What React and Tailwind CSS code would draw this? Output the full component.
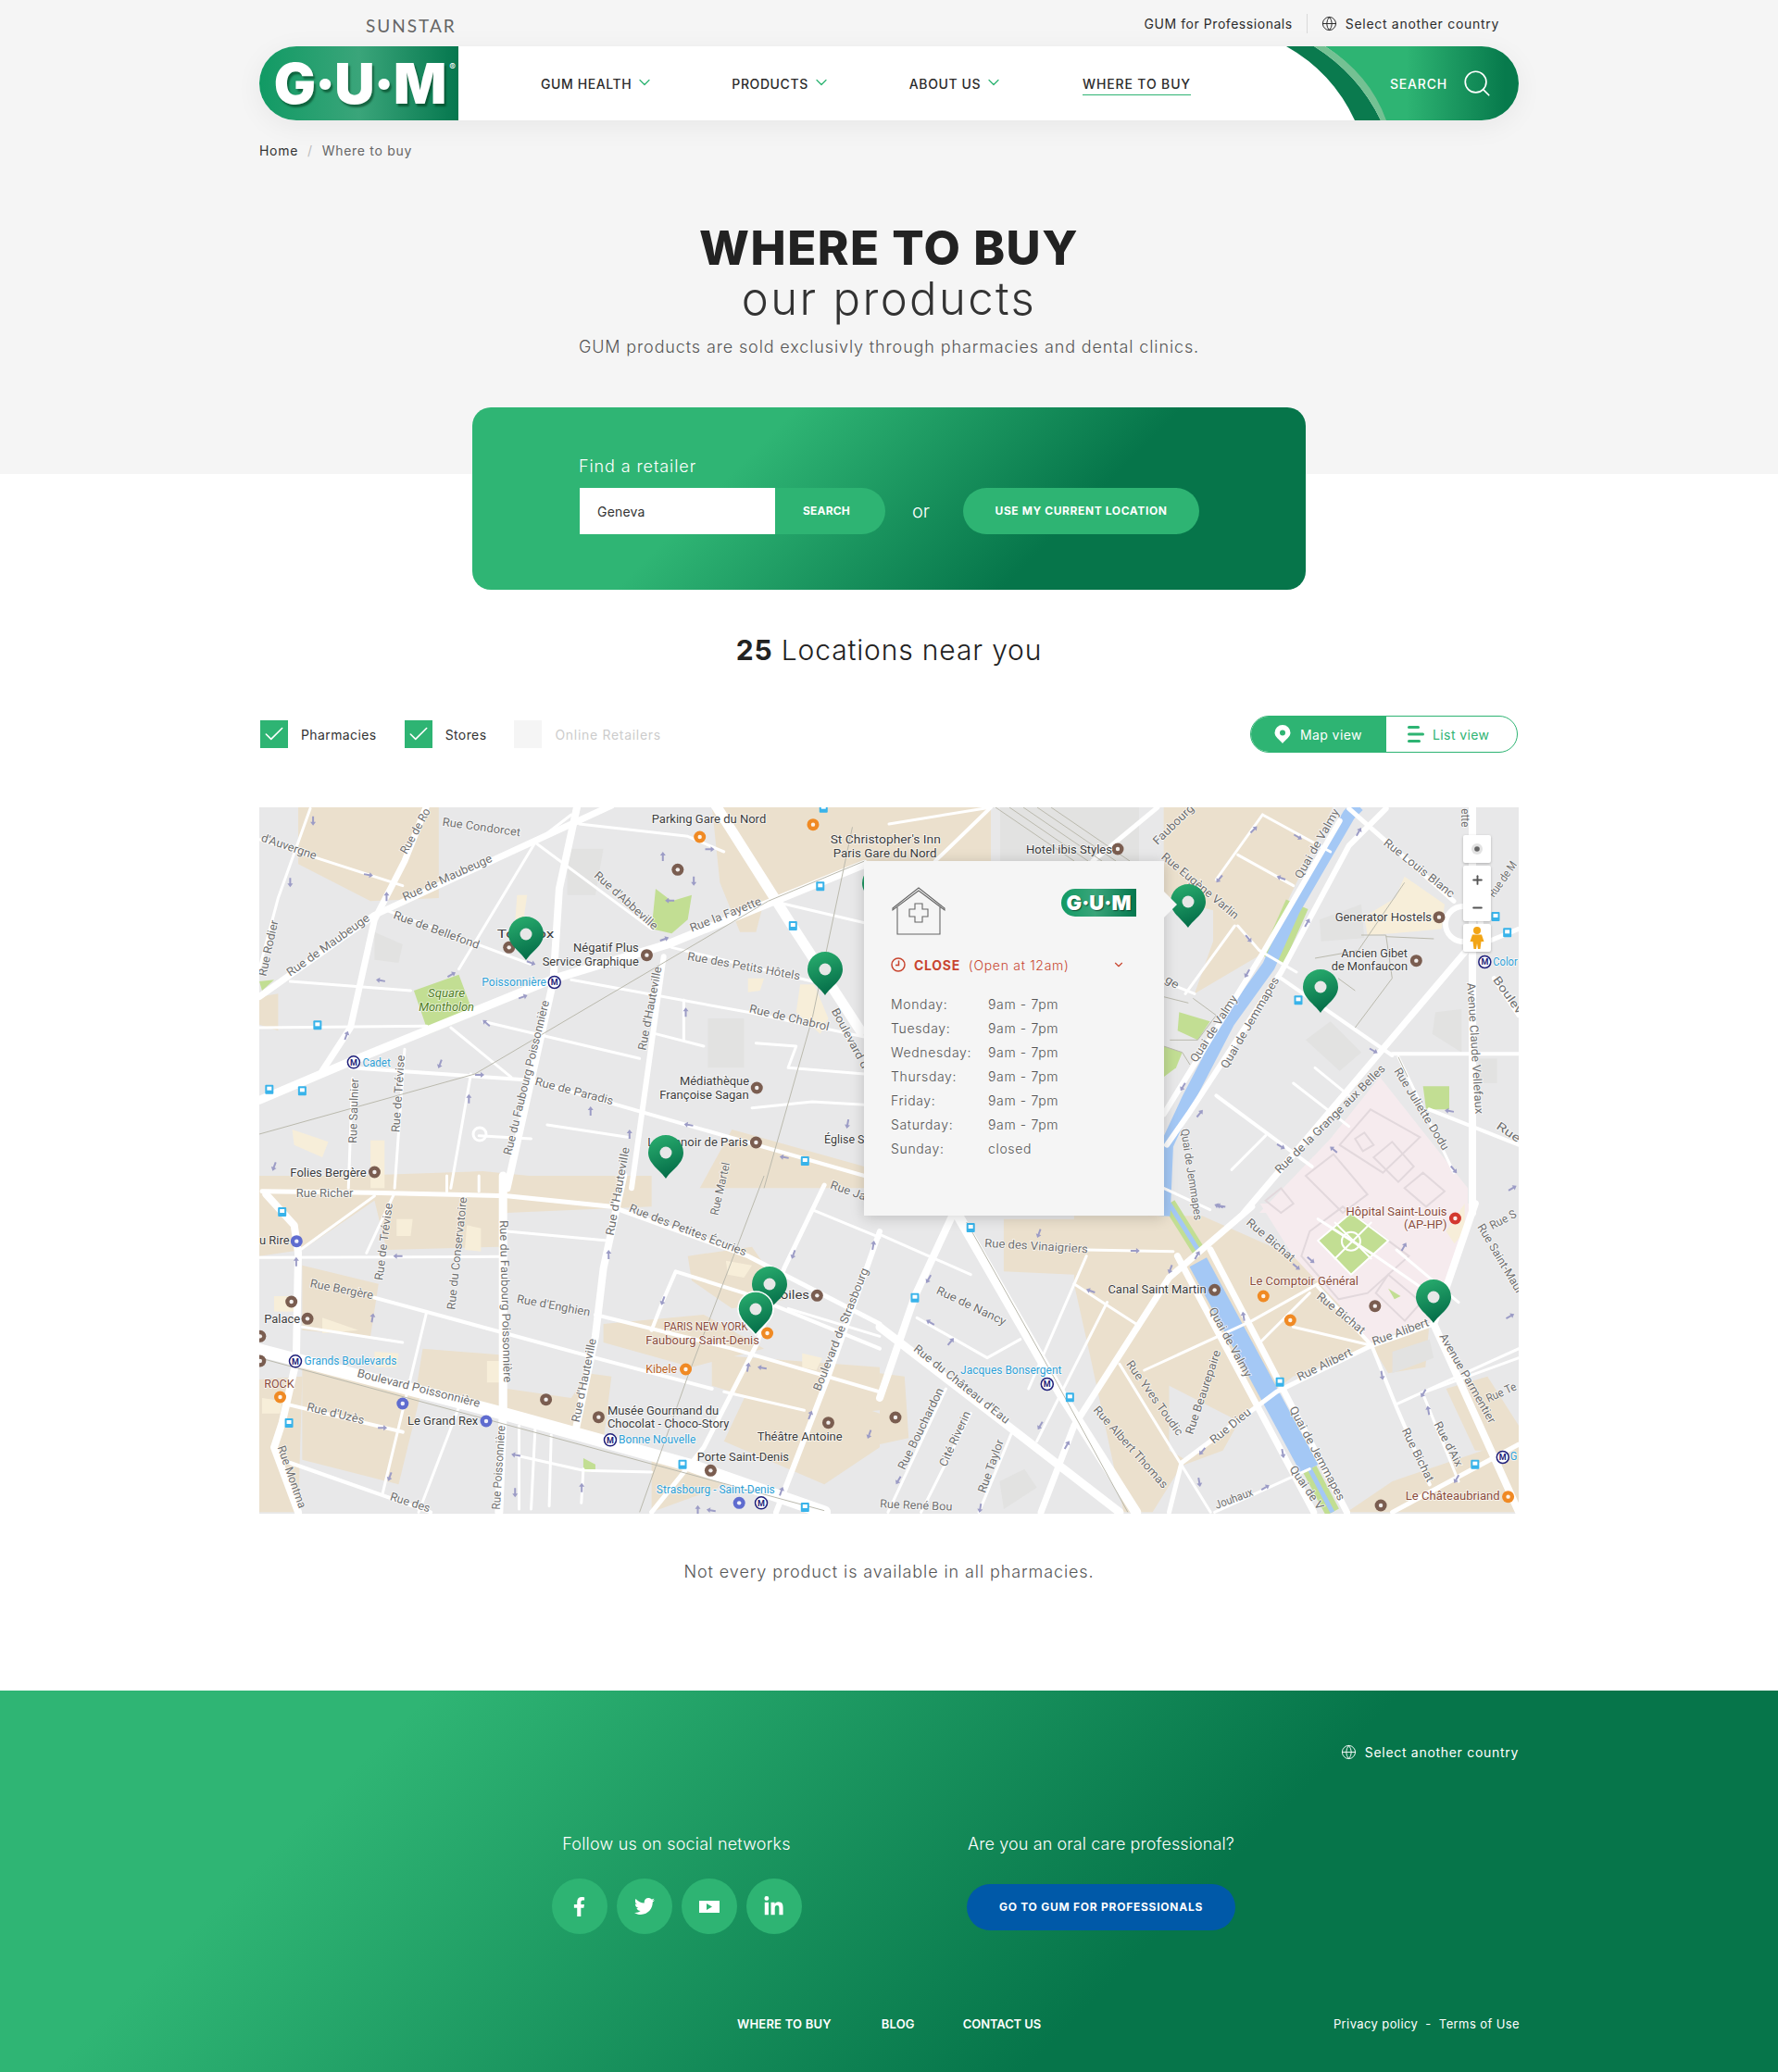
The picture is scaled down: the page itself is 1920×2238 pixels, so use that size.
import React from "react";
import { ChevronDown, Check, Globe, Search, Plus, Minus } from "lucide-react";
import { FaFacebookF, FaTwitter, FaLinkedinIn } from "react-icons/fa";

const R = { A: [270, 860, 2.306, 3], B: [270, 1270, 2.306, 3], C: [1250, 870, 3, 3], D: [950, 1300, 2.24, 3], F: [0, 0, 1, 1] };
const P = (r, x, y) => [R[r][0] + x / R[r][2], R[r][1] + y / R[r][3]];
const pts = (r, a) => { const o = []; for (let i = 0; i < a.length; i += 2) o.push(P(r, a[i], a[i + 1]).join(",")); return o.join(" "); };

const beige = [
  ["A", [120,30,470,30,470,330,300,340,120,220]], ["A", [23,650,70,640,70,760,23,740]],
  ["A", [1150,30,1530,30,1530,210,1280,340,1260,440,1220,440,1170,280]],
  ["A", [1200,1080,1530,1200,1530,1270,1120,1270]], ["A", [23,1240,580,1215,1000,1270,23,1270]],
  ["B", [23,0,1000,0,1000,100,640,120,620,230,340,240,310,80,130,240,23,260]],
  ["B", [130,290,320,350,300,520,130,500]], ["B", [23,660,130,650,120,1090,23,1090]],
  ["B", [130,600,430,680,370,1000,130,920]], ["B", [430,560,620,580,620,760,410,720]],
  ["B", [640,690,800,720,840,640,900,650,880,860,640,780]], ["B", [1090,260,1250,230,1340,400,1200,430,1100,340]],
  ["B", [1150,580,1568,620,1568,760,1400,780,1150,680]], ["B", [880,480,1130,450,1280,560,1100,620,880,540]],
  ["B", [1260,640,1568,770,1568,880,1430,1000,1180,860]], ["B", [1000,900,1150,950,1190,1000,1000,1090]],
  ["C", [20,0,570,0,340,480,120,610,180,440,180,340,20,300]],
  ["D", [470,40,780,40,1000,170,1130,320,1190,460,1000,560,880,680,830,800,730,850,660,1000,590,1000,510,500,470,260]],
  ["D", [300,50,500,50,470,230,300,220]], ["D", [1130,1000,1240,900,1546,760,1546,1000]],
  ["D", [1370,600,1470,560,1546,720,1546,800,1440,800]], ["D", [0,550,60,560,70,760,0,780]], ["D", [1190,460,1330,380,1320,530,1230,550]],
  ["F", [930,872,1070,872,1070,930,930,930]], ["F", [1240,1313,1320,1360,1300,1400,1240,1380]],
];
const cream = [
  ["A", [1370,610,1405,610,1440,720,1420,770,1360,700]], ["A", [1240,590,1280,590,1270,630,1240,635]],
  ["A", [105,1080,195,1120,180,1170,110,1130]], ["A", [300,1115,335,1115,335,1270,300,1270]], ["A", [665,320,690,320,680,410,660,410]],
  ["C", [800,230,930,320,920,400,760,415,680,420,670,360,770,300]],
  ["B", [540,160,575,170,575,245,535,240]], ["B", [365,140,405,140,400,195,365,195]], ["B", [590,600,625,600,625,670,590,670]],
  ["B", [60,390,120,390,120,440,60,440]], ["B", [180,460,270,500,180,510]], ["B", [30,720,80,730,75,770,30,770]], ["B", [310,570,370,575,365,620,310,620]],
  ["B", [1185,275,1250,290,1230,330,1190,320]], ["B", [1375,575,1425,590,1410,630,1375,620]], ["D", [1370,90,1415,0,1415,90,1390,130]],
];
const darker = [
  ["A", [1140,720,1230,720,1230,880,1140,880]], ["A", [790,170,880,170,860,320,790,320]], ["A", [310,440,380,480,370,540,310,530]],
  ["C", [480,760,560,700,660,800,590,860]], ["C", [525,370,660,320,670,430,530,440]], ["C", [1040,820,1100,820,1100,900,1040,900]], ["C", [900,670,985,660,985,800,890,740]],
  ["D", [290,900,350,860,380,920,300,990]], ["D", [1240,480,1330,440,1340,500,1240,550]], ["F", [1080,872,1230,872,1230,930,1080,930]],
];
const wards = [
  ["C", [590,1100,690,985,850,1075,730,1190]], ["C", [760,1090,830,1170,780,1220,700,1140]], ["C", [860,1190,930,1250,870,1300,800,1240]],
  ["C", [480,1200,570,1130,680,1260,600,1320]], ["C", [640,1080,670,1060,700,1100,665,1120]], ["C", [350,1280,400,1240,440,1290,400,1320]],
  ["D", [1040,90,1120,10,1280,170,1180,290,1110,310,1020,170]], ["D", [1230,230,1310,320,1270,380,1200,290]],
];
const parks = [
  ["A", [408,630,520,578,558,710,445,770]], ["A", [1010,300,1050,340,1100,320,1090,400,1050,445,1000,430]], ["A", [23,600,60,595,30,630]],
  ["C", [860,910,945,910,945,985,870,985]], ["C", [70,670,170,700,130,760,65,730]], ["C", [20,780,80,800,60,850,20,880]],
  ["D", [1140,30,1230,120,1140,230,1060,120]], ["B", [830,915,860,935,860,960,830,960]], ["D", [1230,275,1260,300,1245,310]],
];
const roads = [
  ["A",7,[23,650,310,385,900,30]], ["A",9,[23,985,250,860,760,590,1040,480,1530,220]], ["A",7,[180,890,250,750,310,400,385,210,440,30]],
  ["A",11,[1160,30,1350,420,1520,760]], ["A",6,[1030,520,950,1270]], ["A",8,[815,30,770,300,755,600,640,1270]],
  ["A",3,[340,370,700,545]], ["A",4,[250,880,700,920,1100,1070,1530,1230]], ["A",3,[800,595,1240,700,1530,780]],
  ["A",3,[520,560,710,150,800,60]], ["A",3,[820,90,1090,130,1180,180]], ["A",3,[710,150,1000,430]], ["A",3,[23,140,380,290]],
  ["A",3,[580,730,970,850]], ["A",3,[1010,770,1130,810]], ["A",3,[1080,660,1080,790]], ["A",3,[150,40,70,330,23,560]],
  ["A",3,[23,750,440,745]], ["A",3,[255,915,245,1270]], ["A",3,[385,820,360,1270]], ["A",3,[550,900,500,1270]],
  ["A",3,[1050,490,1400,600]], ["A",3,[1300,340,1530,410]], ["A",3,[500,750,650,910]], ["A",3,[400,630,100,600]],
  ["A",3,[740,1065,940,1105]], ["A",3,[570,1100,700,1110]], ["A",3,[1260,800,1360,810,1340,880,1530,900]], ["A",3,[1250,1010,1400,990,1530,1000]],
  ["B",8,[40,60,110,160,120,250,115,600,80,800,60,880,120,1090]], ["B",14,[23,565,630,770,1100,940,1430,1090]],
  ["B",9,[630,0,630,770,620,1090]], ["B",8,[930,0,880,300,860,520,810,830]], ["B",5,[30,50,300,55,640,65,900,100,1240,260,1568,480]],
  ["B",3,[640,180,890,210]], ["B",3,[23,265,620,262]], ["B",4,[310,395,860,590,1150,690]], ["B",4,[860,450,1200,560,1568,700]],
  ["B",4,[1000,500,1030,400,1060,310,1230,380,1568,560]], ["B",5,[1430,30,1330,300,1260,550,1130,880,1000,1090]],
  ["B",6,[1568,180,1440,650,1310,1090]], ["B",3,[1340,430,1568,520]], ["B",4,[90,740,380,830]], ["B",3,[330,1030,440,440]],
  ["B",3,[420,1090,520,750]], ["B",3,[660,905,830,955,1000,960]], ["B",3,[670,810,670,1080]], ["B",3,[710,820,700,1080]], ["B",3,[750,840,745,1070]],
  ["B",3,[830,950,825,1060]], ["B",4,[100,930,340,1040,450,1090]], ["B",3,[360,55,290,250]], ["B",3,[490,0,490,50]], ["B",3,[570,0,570,50]],
  ["B",3,[125,240,310,65]], ["B",3,[130,490,380,540]], ["B",3,[1400,110,1568,200]], ["B",3,[1380,760,1180,700]],
  ["C",5,[620,10,960,310]], ["C",3,[340,30,190,240]], ["C",3,[260,160,440,260]], ["C",3,[260,390,330,470,450,540]], ["C",3,[250,390,90,610]], ["C",3,[20,570,120,610]],
  ["C",6,[590,50,340,480,20,1000]], ["C",6,[740,10,620,130,400,540,100,1000,30,1100]], ["C",7,[1000,470,280,1320]], ["C",4,[400,560,760,810]],
  ["C",4,[760,805,1170,805]], ["C",8,[1020,0,1020,1320]], ["C",5,[1090,560,1170,680]], ["C",4,[190,940,500,1170]], ["C",3,[240,1180,350,1070]],
  ["C",3,[440,900,620,1040]], ["C",3,[510,850,620,940]], ["C",4,[880,985,1170,1100]], ["C",3,[780,815,960,1190]], ["C",3,[340,30,560,150]], ["C",5,[1000,470,1170,400]],
  ["C",3,[20,1240,170,1310]],
  ["D",8,[175,40,85,300,0,630]], ["D",11,[190,40,440,620,620,1000]], ["D",7,[900,10,700,240,470,720,390,1000]], ["D",9,[0,400,310,720,580,1000]],
  ["D",7,[800,150,1130,1000]], ["D",7,[720,170,1050,1000]], ["D",5,[1340,390,1190,460,960,610,730,840,700,1000]], ["D",8,[1440,0,1340,390,1546,1000]],
  ["D",3,[500,150,710,155]], ["D",3,[470,260,620,390]], ["D",3,[640,540,900,380,1060,260]], ["D",4,[1060,270,1190,460,1250,660,1330,910]],
  ["D",3,[1000,400,1190,460]], ["D",3,[1250,650,1546,470]], ["D",3,[1320,610,1546,500]], ["D",5,[1240,1000,1546,780]], ["D",3,[920,450,1040,290]],
  ["D",3,[810,1000,1040,860]], ["D",3,[580,520,800,1000]], ["D",3,[160,600,20,1000]], ["D",3,[220,680,100,1000]], ["D",3,[320,740,240,1000]],
  ["D",3,[550,320,380,770]], ["D",3,[500,170,360,600]], ["D",3,[90,370,260,500,340,440]], ["D",3,[0,100,220,230]],
  ["D",3,[1315,620,1400,900]], ["D",3,[1060,50,1200,170,1340,300]], ["D",3,[1250,150,1400,320]],
  ["F",4,[1070,872,1010,930]], ["F",5,[1250,872,1180,930]], ["F",3,[960,890,1070,872]],
];
const thin = [
  ["A",[23,1095,560,900,1290,340,1530,210]], ["A",[1280,1270,1400,720,1500,100]], ["B",[23,590,1430,1085]], ["B",[1280,0,1090,650,970,1090]],
  ["D",[210,60,420,560,600,1000]], ["C",[640,720,760,560,740,420,660,420]], ["C",[510,495,650,470,800,250]], ["C",[585,560,640,600]], ["C",[895,432,740,425]],
  ["C",[780,815,810,880]], ["C",[115,625,190,680,130,760,40,760]], ["C",[20,620,100,640]], ["C",[20,780,80,800,105,840]],
  ["F",[1075,872,1160,930]], ["F",[1090,872,1175,930]], ["F",[1105,872,1190,930]], ["F",[1120,872,1205,930]], ["F",[1135,872,1220,930]],
];
const labels = [
  ["A","Rue Condorcet",478,95,672,130],["A","d'Auvergne",26,145,162,205],["A","Rue de Ro",390,190,450,48],["A","Rue de Maubeuge",385,340,605,210],
  ["A","Rue de Maubeuge",100,585,300,400],["A","Rue de Bellefond",355,395,567,495],["A","Rue Rodier",40,585,70,405],["A","Rue d'Abbeville",855,260,1005,435],
  ["A","Parking Gare du Nord",1000,88,1285,88,1],["A","St Christopher's Inn",1445,153,1720,153,1],["A","Paris Gare du Nord",1452,197,1710,197,1],["A","Rue la Fayette",1100,440,1275,350],
  ["A","Négatif Plus",805,505,968,505,1],["A","Service Graphique",728,550,968,550,1],["A","Toolbox",615,458,757,458,1],["A","Poissonnière",577,615,738,615,2],
  ["A","Rue des Petits Hôtels",1088,530,1368,595],["A","Rue de Chabrol",1242,700,1440,760],["A","Boulevard d",1447,695,1525,885],["A","Square",443,650,535,650,3],["A","Montholon",420,695,558,695,3],
  ["A","Rue du Faubourg Poissonnière",650,1165,745,665],["A","Rue d'Hauteville",985,825,1025,555],["A","Cadet",280,875,350,875,2],["A","Rue Saulnier",265,1125,270,915],["A","Rue de Trévise",372,1090,385,840],
  ["A","Rue de Paradis",708,935,902,1000],["A","Médiathèque",1070,937,1243,937,1],["A","Françoise Sagan",1020,980,1242,980,1],["A","Le Manoir de Paris",990,1135,1240,1135,1],["A","Église S",1430,1125,1530,1125,1],["A","Folies Bergère",100,1232,290,1232,1],
  ["B","Rue Martel",1165,130,1195,-40],["B","Rue Richer",115,68,257,68],["B","Rue de Trévise",330,340,355,90],["B","Rue du Conservatoire",510,435,540,70],["B","Rue du Faubourg Poissonnière",622,145,632,670],
  ["B","Rue d'Hauteville",905,195,945,-90],["B","Rue des Petites Écuries",942,115,1232,260],["B","Rue Ja",1443,40,1530,80],["B","u Rire",23,222,98,222,1],["B","Rue Bergère",148,360,305,400],["B","Rue d'Enghien",663,410,845,455],["B","Palace",35,477,125,477,1],
  ["B","Grands Boulevards",135,612,365,612,2],["B","ROCK",35,688,110,688,4],["B","Boulevard Poissonnière",265,650,570,750],["B","Rue d'Uzès",140,760,282,805],["B","Le Grand Rex",392,806,568,806,1],["B","Rue d'Hauteville",820,800,862,530],
  ["B","Kibele",985,640,1063,640,5],["B","PARIS NEW YORK",1030,500,1240,500,4],["B","Faubourg Saint-Denis",985,545,1268,545,4],["B","Étoiles",1290,400,1393,400,1],["B","Boulevard de Strasbourg",1420,700,1540,305],["B","Musée Gourmand du",890,773,1167,773,1],["B","Chocolat - Choco-Story",890,817,1193,817,1],
  ["B","Bonne Nouvelle",918,867,1110,867,2],["B","Théâtre Antoine",1263,857,1475,857,1],["B","Porte Saint-Denis",1113,925,1342,925,1],["B","Strasbourg - Saint-Denis",1012,1030,1307,1030,2],["B","Rue Montma",68,880,122,1080],["B","Rue des",347,1050,445,1090],["B","Rue Poissonnière",622,1082,635,810],
  ["C","Rue Eugène Varlin",10,170,250,370],["C","Faubourg",0,130,120,12],["C","Quai de Valmy",465,240,590,20],["C","Rue Louis Blanc",730,125,950,300],["C","Rue de M",1090,300,1166,192],["C","Generator Hostels",575,375,888,375,1],["C","Ancien Gibet",595,492,810,492,1],["C","de Monfaucon",563,535,810,535,1],
  ["C","Color",1087,518,1166,518,2],["C","Boulev",1085,565,1166,678],["C","Avenue Claude Vellefaux",1003,575,1030,1000],["C","Quai de Valmy",125,835,260,625],["C","Quai de Jemmapes",225,855,395,565],["C","ge",22,570,60,595],["C","Rue Juliette Dodu",765,860,925,1120],["C","Rue de la Grange aux Belles",395,1195,740,855],["C","Rue",1095,1045,1166,1093],["C","Quai de Jemmapes",75,1050,120,1345],["C","ette",985,10,985,70],
  ["D","Hôpital Saint-Louis",1128,38,1372,38,4],["D","(AP-HP)",1268,82,1372,82,4],["D","Rue des Vinaigriers",253,140,503,160],["D","Rue de Nancy",135,290,300,395],["D","Canal Saint Martin",552,290,790,290,1],["D","Le Comptoir Général",895,265,1158,265,4],["D","Rue Bichat",885,65,995,190],["D","Rue Bichat",1055,305,1165,425],["D","Rue Alibert",1195,460,1330,395],["D","Rue Alibert",1015,575,1145,490],
  ["D","Avenue Parmentier",1353,430,1475,715],["D","Rue Saint-Maur",1445,75,1542,295],["D","Rue S",1482,85,1542,42],["D","Rue Te",1472,645,1542,602],["D","Jacques Bonsergent",195,553,440,553,2],["D","Rue du Château d'Eau",80,475,305,715],["D","Rue Bouchardon",60,865,155,605],["D","Cité Riverin",160,855,220,680],["D","Rue Taylor",255,940,300,770],["D","Rue Albert Thomas",515,670,685,925],["D","Rue Yves Toudic",595,520,720,755],
  ["D","Rue Beaurepaire",757,750,825,480],["D","Quai de Valmy",795,345,885,565],["D","Rue Dieu",808,780,900,680],["D","Quai de Jemmapes",990,665,1110,965],["D","Rue Bichat",1262,735,1325,905],["D","Rue d'Aix",1340,715,1395,855],["D","Le Châteaubriand",1272,960,1500,960,4],["D","Rue René Bou",0,985,175,995],["D","Jouhaux",815,990,905,945],["D","Quai de V",990,860,1060,995],["D","G",1525,832,1542,832,2],
  ["F","Hotel ibis Styles",1108,922,1201,922,1],
];
const colors = { 0: "#6f6f6f", 1: "#3c3c3c", 2: "#2e9fd6", 3: "#4f7d23", 4: "#8a4b3a", 5: "#b85f1c" };
const poi = {
  "#7a5d50": [["A",1065,238],["A",645,490],["A",988,515],["A",1262,945],["A",1260,1122],["A",310,1218],["B",103,408],["B",143,463],["B",25,520],["B",25,600],["B",737,725],["B",868,782],["B",1412,388],["B",1440,800],["B",1147,955],["C",912,362],["C",838,503],["D",810,280],["D",1198,332],["D",38,693],["D",1212,978],["F",1207,917]],
  "#f08a24": [["A",1120,132],["A",1402,92],["B",1288,510],["B",1085,627],["B",75,717],["D",928,300],["D",993,378],["D",1520,950]],
  "#5f6ccf": [["B",116,212],["B",380,738],["B",588,795],["B",1218,1060]],
  "#d3382f": [["D",1392,48]],
};
const metro = [["A",758,603],["A",258,862],["B",113,601],["B",897,856],["B",1273,1060],["C",1060,507],["D",405,585],["D",1507,822]];
const bus = [["A",1420,292],["A",1352,420],["A",168,742],["A",48,950],["A",130,955],["A",1382,1182],["A",1428,38],["B",80,117],["B",97,801],["B",1077,935],["B",1382,1074],["C",456,631],["C",1095,360],["C",1133,412],["D",220,78],["D",85,305],["D",460,628],["D",968,578],["D",1440,845]];
const arrows = [["A",157,80,180],["A",100,280,180],["A",295,255,100],["A",340,325,0],["A",1028,195,0],["A",1105,275,180],["A",1045,338,270],["A",1145,172,90],["A",1032,463,70],["A",700,540,110],["A",502,578,60],["A",325,597,280],["A",680,650,70],["A",588,735,310],["A",240,775,20],["A",473,868,200],["A",572,903,90],["A",545,980,0],["A",848,1020,0],["A",1085,700,0],["A",945,1095,0],["A",1092,1065,280],["A",1330,1170,280],["A",1488,1062,190],["A",60,1200,200],
  ["B",115,278,0],["B",368,260,270],["B",305,460,10],["B",893,255,0],["B",1028,405,200],["B",1353,255,200],["B",1240,620,10],["B",1275,622,280],["B",1395,775,20],["B",330,817,90],["B",348,975,200],["B",662,905,280],["B",660,1027,180],["B",826,1010,0],["B",1323,1022,20],["B",1115,1082,0],["B",1148,1084,280],["B",1542,838,200],["B",1552,225,10],
  ["C",312,78,45],["C",455,102,120],["C",400,235,290],["C",200,238,220],["C",295,432,140],["C",290,545,210],["C",485,380,30],["C",700,795,120],["C",945,990,280],["C",960,1180,140],["C",400,1105,120],["C",570,1115,310],["C",82,912,210],["C",137,998,40],["C",205,1298,280],["C",1150,1240,60],["C",652,85,30],
  ["D",385,97,200],["D",618,153,90],["D",703,213,200],["D",118,245,210],["D",122,385,300],["D",172,447,40],["D",510,283,290],["D",880,365,350],["D",768,167,30],["D",1043,183,130],["D",1008,205,130],["D",1268,140,30],["D",1215,557,170],["D",1315,615,210],["D",1327,670,350],["D",388,720,210],["D",453,782,30],["D",780,803,220],["D",773,903,170],["D",975,810,170],["D",933,920,60],["D",1395,893,210],["D",243,987,190],["D",45,897,210],["D",820,8,290],["D",1525,365,60]];
const pins = [[950,955],[568,1010],[891,1048],[719,1246],[1283,975],[1426,1067],[831,1388],[816,1415,1],[1548,1402]];

function Pin({ c }) {
  const [x, y, halo] = c;
  return (
    <g>
      <path d={`M${x} ${y + 27} C${x - 6} ${y + 18} ${x - 19} ${y + 11} ${x - 19} ${y - 1} A19 19 0 1 1 ${x + 19} ${y - 1} C${x + 19} ${y + 11} ${x + 6} ${y + 18} ${x} ${y + 27}Z`} fill="url(#pinG)" stroke={halo ? "#fff" : "none"} strokeWidth={halo ? 1.5 : 0} />
      <circle cx={x} cy={y - 1} r="6.5" fill="#e7e7e7" />
    </g>
  );
}

function MapCanvas() {
  return (
    <svg viewBox="280 872 1360 763" className="block w-[1360px] h-[763px]" fontFamily="Roboto, sans-serif">
      <defs>
        <linearGradient id="pinG" x1="0" y1="0" x2="0.3" y2="1"><stop offset="0" stopColor="#2bb070" /><stop offset="1" stopColor="#06704a" /></linearGradient>
      </defs>
      <rect x="280" y="872" width="1360" height="763" fill="#e8e8e9" />
      {beige.map((b, i) => <polygon key={i} points={pts(b[0], b[1])} fill="#ebe0cd" />)}
      <polygon points={pts("C", [720,880,1005,1240,1005,1320,330,1320,560,1080])} fill="#f6ebee" />
      <polygon points={pts("D", [920,0,1440,0,1340,380,1180,450,1120,340,1000,170])} fill="#f6ebee" />
      <polygon points={pts("D", [700,590,860,700,740,830,700,800])} fill="#e8e8e9" />
      {darker.map((b, i) => <polygon key={i} points={pts(b[0], b[1])} fill="#e2e2e1" />)}
      {wards.map((b, i) => <polygon key={i} points={pts(b[0], b[1])} fill="none" stroke="#e2d8dc" strokeWidth="2" />)}
      {cream.map((b, i) => <polygon key={i} points={pts(b[0], b[1])} fill="#f7eed9" />)}
      {parks.map((b, i) => <polygon key={i} points={pts(b[0], b[1])} fill="#c2de93" />)}
      <polyline points={pts("D", [700,0,770,150])} fill="none" stroke="#c2de93" strokeWidth="14" />
      <polyline points={pts("C", [452,320,372,500])} fill="none" stroke="#c2de93" strokeWidth="26" />
      <polyline points={pts("D", [1040,860,1095,1000])} fill="none" stroke="#c2de93" strokeWidth="16" />
      <polyline points={pts("C", [650,0,620,30,440,340,360,520,230,700,100,950,30,1100,20,1330])} fill="none" stroke="#a4c8f5" strokeWidth="14" />
      <polyline points={pts("C", [452,320,372,500])} fill="none" stroke="#a4c8f5" strokeWidth="5" />
      <polyline points={pts("D", [700,0,770,150])} fill="none" stroke="#a4c8f5" strokeWidth="5" />
      <polyline points={pts("D", [770,190,1040,860])} fill="none" stroke="#a4c8f5" strokeWidth="21" />
      <polyline points={pts("D", [1040,860,1095,1000])} fill="none" stroke="#a4c8f5" strokeWidth="5" />
      {roads.map((r, i) => <polyline key={i} points={pts(r[0], r[2])} fill="none" stroke="#fff" strokeWidth={r[1]} strokeLinejoin="round" strokeLinecap="round" />)}
      <circle cx="1580" cy="998" r="19" fill="none" stroke="#fff" strokeWidth="6" />
      <circle cx="518" cy="1225" r="7" fill="none" stroke="#fff" strokeWidth="3" />
      {thin.map((r, i) => <polyline key={i} points={pts(r[0], r[1])} fill="none" stroke="#bab9ad" strokeWidth="1" />)}
      <g fill="none" stroke="#fff" strokeWidth="2">
        <polygon points={pts("D", [1140,30,1230,120,1140,230,1060,120])} />
        <circle cx={P("D",1140,122)[0]} cy={P("D",1140,122)[1]} r="10" />
        <path d={`M${P("D",1100,60).join(" ")} L${P("D",1190,180).join(" ")} M${P("D",1190,60).join(" ")} L${P("D",1100,180).join(" ")}`} />
      </g>
      {arrows.map((a, i) => { const [x, y] = P(a[0], a[1], a[2]); return <path key={i} transform={`translate(${x} ${y}) rotate(${a[3]})`} d="M0 -5 L3 -1 L1 -1 L1 5 L-1 5 L-1 -1 L-3 -1Z" fill="#9c9cc6" />; })}
      {Object.entries(poi).flatMap(([col, list]) => list.map((p, i) => { const [x, y] = P(p[0], p[1], p[2]); return <g key={col + i}><circle cx={x} cy={y} r="6.5" fill={col} /><circle cx={x} cy={y} r="2.2" fill="#fff" opacity="0.9" /></g>; }))}
      {bus.map((p, i) => { const [x, y] = P(p[0], p[1], p[2]); return <g key={i}><rect x={x - 4.5} y={y - 5} width="9" height="10" rx="1" fill="#38b3ea" /><rect x={x - 2.5} y={y - 3} width="5" height="4" fill="#fff" /></g>; })}
      {metro.map((p, i) => { const [x, y] = P(p[0], p[1], p[2]); return <g key={i}><circle cx={x} cy={y} r="6.5" fill="#fff" stroke="#1f1f7a" strokeWidth="1.5" /><text x={x} y={y + 3.4} fontSize="9" fontWeight="700" textAnchor="middle" fill="#1f1f7a">M</text></g>; })}
      {labels.map((l, i) => {
        const [x1, y1] = P(l[0], l[2], l[3]);
        const [x2, y2] = P(l[0], l[4], l[5]);
        const ang = (Math.atan2(y2 - y1, x2 - x1) * 180) / Math.PI;
        const len = Math.hypot(x2 - x1, y2 - y1);
        const k = l[6] || 0;
        return (
          <text key={i} transform={`translate(${x1} ${y1}) rotate(${ang})`} fontSize="12.5" fill={colors[k]} fontStyle={k === 3 ? "italic" : "normal"} textLength={len} lengthAdjust="spacingAndGlyphs" stroke="#fff" strokeOpacity="0.75" strokeWidth="1.6" paintOrder="stroke">{l[1]}</text>
        );
      })}
      {pins.map((c, i) => <Pin key={i} c={c} />)}
    </svg>
  );
}

function Logo({ small }) {
  return (
    <div className={small ? "flex items-center justify-center w-[81px] h-[30px] rounded-l-[15px] bg-[linear-gradient(90deg,#119a64,#3aa57a_45%,#05774e)]" : "flex items-center justify-center w-[215px] h-[80px] rounded-l-[40px] bg-[linear-gradient(90deg,#119a64,#3aa57a_50%,#05774e)] relative"}>
      <span className={small ? "font-['Inter',sans-serif] font-black text-white text-[22px] leading-none [text-shadow:1px_1px_1px_rgba(0,50,30,.7)]" : "font-['Inter',sans-serif] font-black text-white text-[60px] leading-none tracking-[-1px] pl-[2px] [text-shadow:2px_3px_2px_rgba(0,60,30,.6)]"}>G·U·M</span>
      {!small && <span className="absolute right-[3px] top-[17px] text-[10px] leading-none text-white">®</span>}
    </div>
  );
}

function NavItem({ children }) {
  return (
    <div className="flex items-center gap-[4px] text-[14px] font-medium tracking-[0.6px] text-[#2b2b2b]">
      <span>{children}</span>
      <ChevronDown size={20} strokeWidth={1.5} className="text-[#2eb473] -mt-[3px] -mr-[5px]" />
    </div>
  );
}

function CheckRow({ on, label, cls }) {
  return (
    <div className={`flex items-center gap-[14px] ${cls}`}>
      <div className={on ? "w-[30px] h-[30px] bg-[#2eb473] flex items-center justify-center" : "w-[30px] h-[30px] bg-[#f5f5f5]"}>
        {on && <Check size={26} strokeWidth={1.5} className="text-white" />}
      </div>
      <span className={on ? "text-[14px] tracking-[0.4px] text-[#333]" : "text-[14px] tracking-[0.7px] text-[#ccc]"}>{label}</span>
    </div>
  );
}

const days = [["Monday:", "9am - 7pm"], ["Tuesday:", "9am - 7pm"], ["Wednesday:", "9am - 7pm"], ["Thursday:", "9am - 7pm"], ["Friday:", "9am - 7pm"], ["Saturday:", "9am - 7pm"], ["Sunday:", "closed"]];

function Social({ children }) {
  return <div className="w-[60px] h-[60px] rounded-full bg-[#2eb473] flex items-center justify-center text-white">{children}</div>;
}

export default function App() {
  return (
    <div className="font-['Inter',sans-serif] bg-white w-[1920px] min-h-[2238px] overflow-hidden text-[#2b2b2b]">
      <div className="bg-[#f5f5f5] h-[512px]">
        <div className="w-[1360px] mx-auto">
          <div className="h-[50px] flex items-center justify-between relative">
            <span className="ml-[115px] font-['Lato',sans-serif] text-[19px] tracking-[2px] text-[#666] pt-[6px]">SUNSTAR</span>
            <div className="flex items-center mr-[21px] text-[14px] tracking-[0.55px] text-[#2b2b2b]">
              <span>GUM for Professionals</span>
              <span className="w-px h-[21px] bg-[#d9d9d9] mx-[15px]" />
              <Globe size={17} strokeWidth={1.4} className="mr-[9px]" />
              <span className="tracking-[0.7px]">Select another country</span>
            </div>
          </div>
          <div className="relative h-[80px] bg-white rounded-r-[40px] rounded-l-[40px] flex items-center shadow-[0_6px_30px_rgba(0,0,0,0.06)]">
            <Logo />
            <div className="flex items-center gap-[89px] ml-[89px]">
              <NavItem>GUM HEALTH</NavItem>
              <NavItem>PRODUCTS</NavItem>
              <div className="ml-[1px]"><NavItem>ABOUT US</NavItem></div>
              <span className="ml-[2px] text-[14px] font-medium tracking-[0.85px] border-b border-[#2eb473] leading-[23px] mt-[2px]">WHERE TO BUY</span>
            </div>
            <svg width="251" height="80" viewBox="0 0 251 80" className="absolute right-0 top-0">
              <defs>
                <linearGradient id="sg" x1="0" y1="0" x2="1" y2="0"><stop offset="0.42" stopColor="#2eb473" /><stop offset="0.93" stopColor="#077a4c" /></linearGradient>
              </defs>
              <path d="M42 0 Q88 30 106 80 H211 A40 40 0 0 0 211 0Z" fill="url(#sg)" />
              <path d="M0 0 Q50 28 74 80 H102 Q78 30 30 0Z" fill="#0a7a4e" />
              <path d="M30 0 Q78 30 102 80 H108 Q90 30 42 0Z" fill="#74c193" />
            </svg>
            <span className="absolute left-[1221px] top-[31px] text-[14px] tracking-[0.8px] leading-[20px] text-white font-medium">SEARCH</span>
            <Search size={34} strokeWidth={1.2} className="absolute left-[1298px] top-[23px] text-white" />
          </div>
          <div className="mt-[22px] h-[20px] flex items-center text-[14px] tracking-[0.7px] text-[#666]">
            <span className="text-[#333]">Home</span>
            <span className="mx-[10px] text-[#bbb]">/</span>
            <span>Where to buy</span>
          </div>
        </div>
        <h1 className="mt-[71px] text-center text-[51px] leading-[50px] tracking-[1.5px] font-extrabold text-[#222]">WHERE TO BUY</h1>
        <h2 className="mt-[5px] text-center text-[49px] leading-[50px] tracking-[2.4px] font-light text-[#333]">our products</h2>
        <p className="mt-[15px] text-center text-[18px] leading-[24px] tracking-[0.87px] font-light text-[#555]">GUM products are sold exclusivly through pharmacies and dental clinics.</p>
      </div>

      <div className="relative w-[900px] h-[197px] -mt-[72px] mx-auto rounded-[20px] bg-[linear-gradient(135deg,#2fb574_32%,#06754a_70%)] pl-[116px] pt-[50px] text-white">
        <div className="-ml-[1px] text-[18px] leading-[28px] tracking-[0.9px] font-light">Find a retailer</div>
        <div className="mt-[9px] flex items-center">
          <div className="w-[211px] h-[50px] bg-white flex items-center pl-[19px] text-[14px] tracking-[0.2px] font-normal text-[#333]">Geneva</div>
          <div className="w-[119px] h-[50px] bg-[#2eb473] rounded-r-[25px] flex items-center justify-center text-[12px] tracking-[0.2px] font-bold pr-[8px]">SEARCH</div>
          <span className="ml-[29px] w-[55px] text-[20px] font-light">or</span>
          <div className="w-[255px] h-[50px] bg-[#2eb473] rounded-full flex items-center justify-center text-[12px] tracking-[0.6px] font-bold">USE MY CURRENT LOCATION</div>
        </div>
      </div>

      <div className="mt-[45px] text-center text-[30px] leading-[40px] tracking-[0.85px] font-light text-[#222]"><b className="font-bold">25</b> Locations near you</div>

      <div className="w-[1360px] mx-auto">
        <div className="mt-[51px] h-[40px] flex items-center">
          <CheckRow on label="Pharmacies" cls="ml-[1px]" />
          <CheckRow on label="Stores" cls="ml-[30px]" />
          <CheckRow label="Online Retailers" cls="ml-[30px]" />
          <div className="ml-auto flex w-[289px] h-[40px] rounded-full border border-[#2eb473] overflow-hidden text-[14px] tracking-[0.4px] mr-[1px]">
            <div className="w-[146px] bg-[#2eb473] text-white flex items-center pl-[25px] gap-[10px]">
              <svg width="18" height="20" viewBox="0 0 18 20"><path fillRule="evenodd" d="M9 20C6 16 .5 13 .5 8.5a8.5 8.5 0 0 1 17 0C17.500 13 12 16 9 20Zm0-8.500a3 3 0 1 0 0-6 3 3 0 0 0 0 6Z" fill="#fff" /></svg>
              <span>Map view</span>
            </div>
            <div className="flex-1 text-[#2eb473] flex items-center pl-[22px] gap-[8px]">
              <svg width="20" height="20" viewBox="0 0 20 20" fill="#2eb473"><rect x="1" y="1" width="13" height="3" rx="1.500" /><rect x="1" y="8.500" width="18" height="3" rx="1.500" /><rect x="1" y="16" width="14" height="3" rx="1.500" /></svg>
              <span>List view</span>
            </div>
          </div>
        </div>

        <div className="relative mt-[59px] h-[763px]">
          <MapCanvas />
          <div className="absolute left-[653px] top-[58px] w-[324px] h-[383px] bg-[#f5f5f5] shadow-[0_2px_14px_rgba(0,0,0,0.18)] pl-[29px] pr-[30px] pt-[28px]">
            <svg className="absolute -right-[14px] top-[33px]" width="14" height="28" viewBox="0 0 14 28"><path d="M0 0 L14 14 L0 28Z" fill="#f5f5f5" /></svg>
            <div className="flex items-start justify-between">
              <svg width="58" height="52" viewBox="0 0 58 52" fill="none" stroke="#666" strokeWidth="1.100" className="ml-[1px]">
                <path d="M1 23 L29 1 L57 23 L57 25 L29 4 L1 25Z" />
                <path d="M6 22 V51 H52 V22" />
                <path d="M25 18 H33 V24 H39 V32 H33 V38 H25 V32 H19 V24 H25Z" />
              </svg>
              <div className="mt-[2px]"><Logo small /></div>
            </div>
            <div className="mt-[22px] flex items-center h-[20px] text-[14px] tracking-[0.7px] text-[#c8452f]">
              <svg width="16" height="16" viewBox="0 0 16 16" fill="none" stroke="#c8452f" strokeWidth="1.500"><circle cx="8" cy="8" r="7" /><path d="M8.500 3.500 V8.500 H5" /></svg>
              <b className="ml-[9px] font-bold">CLOSE</b>
              <span className="ml-[9px] font-light">(Open at 12am)</span>
              <ChevronDown size={14} strokeWidth={2} className="ml-auto mr-[12px]" />
            </div>
            <div className="mt-[19px] text-[14px] tracking-[0.65px] font-light text-[#555]">
              {days.map((d) => (
                <div key={d[0]} className="flex h-[26px] items-center">
                  <span className="w-[105px]">{d[0]}</span>
                  <span>{d[1]}</span>
                </div>
              ))}
            </div>
          </div>
          <div className="absolute right-[30px] top-[30px] flex flex-col gap-[3px] w-[30px]">
            <div className="h-[30px] bg-white shadow-[0_1px_3px_rgba(0,0,0,0.25)] rounded-[2px] flex items-center justify-center">
              <svg width="14" height="14" viewBox="0 0 14 14"><circle cx="7" cy="7" r="6" fill="#e2e2e2" /><circle cx="7" cy="7" r="2.800" fill="#666" /></svg>
            </div>
            <div className="h-[60px] bg-white shadow-[0_1px_3px_rgba(0,0,0,0.25)] rounded-[2px] flex flex-col items-center justify-around text-[#555]">
              <Plus size={15} strokeWidth={3} />
              <Minus size={15} strokeWidth={3} />
            </div>
            <div className="h-[30px] bg-white shadow-[0_1px_3px_rgba(0,0,0,0.25)] rounded-[2px] flex items-center justify-center">
              <svg width="16" height="25" viewBox="0 0 16 25" fill="#f2a516"><circle cx="8" cy="4" r="4" /><path d="M3 8.500 H13 L15.500 16 H12.500 L11.500 24 H9 L8 18 L7 24 H4.500 L3.500 16 H.5Z" /></svg>
            </div>
          </div>
        </div>
      </div>

      <p className="mt-[49px] text-center text-[18px] leading-[28px] tracking-[0.9px] font-light text-[#555]">Not every product is available in all pharmacies.</p>

      <footer className="mt-[114px] h-[412px] bg-[linear-gradient(135deg,#2fb574_20%,#06754a_65%)] text-white">
        <div className="w-[1360px] mx-auto pt-[56px]">
          <div className="flex justify-end items-center h-[20px] text-[14px] tracking-[0.7px]">
            <Globe size={17} strokeWidth={1.3} className="mr-[9px]" />
            <span>Select another country</span>
          </div>
          <div className="mt-[76px] ml-[316px] flex">
            <div className="w-[269px] flex flex-col items-center">
              <div className="text-[18px] leading-[28px] tracking-[0.2px] font-light whitespace-nowrap">Follow us on social networks</div>
              <div className="mt-[23px] flex gap-[10px]">
                <Social><FaFacebookF size={21} /></Social>
                <Social><FaTwitter size={22} /></Social>
                <Social><svg width="22" height="13" viewBox="0 0 22 13"><path fillRule="evenodd" fill="#fff" d="M0 0 H22 V13 H0Z M8 3 V10 L14 6.500Z" /></svg></Social>
                <Social><FaLinkedinIn size={23} /></Social>
              </div>
            </div>
            <div className="ml-[179px] w-[290px]">
              <div className="text-[18px] leading-[28px] tracking-[0.1px] font-light whitespace-nowrap text-center">Are you an oral care professional?</div>
              <div className="mt-[29px] w-[290px] h-[50px] rounded-full bg-[#0059a8] flex items-center justify-center text-[12px] tracking-[0.75px] font-bold">GO TO GUM FOR PROFESSIONALS</div>
            </div>
          </div>
          <div className="mt-[88px] h-[20px] flex items-center text-[13px] tracking-[0.2px] font-semibold">
            <span className="ml-[516px]">WHERE TO BUY</span>
            <span className="ml-[54px]">BLOG</span>
            <span className="ml-[52px] tracking-[-0.1px]">CONTACT US</span>
            <span className="ml-auto -mr-[1px] text-[13px] font-normal tracking-[0.4px] whitespace-pre">Privacy policy  -  Terms of Use</span>
          </div>
        </div>
      </footer>
    </div>
  );
}
